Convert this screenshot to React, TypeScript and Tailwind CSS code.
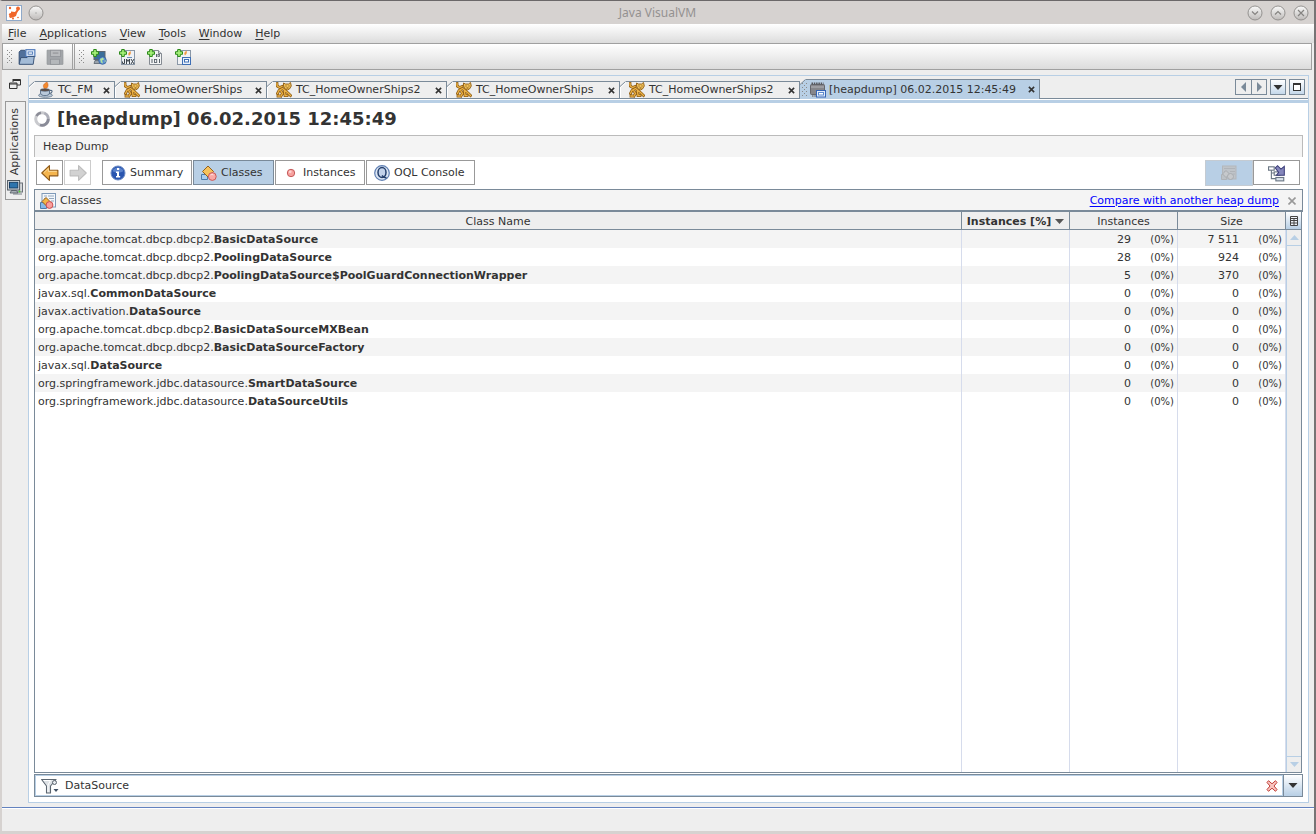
import React from "react";

type IconProps = { className?: string };

const Svg = ({ children, className = "h-4 w-4" }: { children: React.ReactNode; className?: string }) => (
  <svg viewBox="0 0 16 16" className={`${className} shrink-0`} aria-hidden="true">
    {children}
  </svg>
);

const AppIcon = () => (
  <Svg>
    <rect x="0.5" y="0.5" width="15" height="15" fill="#fff" stroke="#8fa9c9" />
    <path d="M5 6.500l4 .5 3-4 1.500 1-2.500 4-1 3-3 1.500-3 .5-1-2 2-1z" fill="#f0662a" />
    <circle cx="4" cy="3" r="1.200" fill="#f0662a" />
    <circle cx="12" cy="3.500" r="1.900" fill="#f0662a" />
    <circle cx="4.500" cy="9.500" r="1.600" fill="#f0662a" />
    <circle cx="7" cy="13.500" r="1" fill="#f0662a" />
    <circle cx="12" cy="12.500" r="0.800" fill="#f0662a" />
  </Svg>
);

const Orb = ({ d }: { d: string }) => (
  <svg viewBox="0 0 16 16" className="h-4 w-4" aria-hidden="true">
    <defs>
      <linearGradient id="orb" x1="0" y1="0" x2="0" y2="1">
        <stop offset="0" stopColor="#fafafa" />
        <stop offset="1" stopColor="#bdbab8" />
      </linearGradient>
    </defs>
    <circle cx="8" cy="8" r="7" fill="url(#orb)" stroke="#8c8a88" strokeWidth="0.9" />
    <path d={d} fill="none" stroke="#858381" strokeWidth="1.2" />
  </svg>
);

const OpenIcon = () => (
  <Svg className="h-[18px] w-[18px]">
    <path d="M1 14V3.500L2.500 2H6l1 1.500h5V14z" fill="#51709a" stroke="#324c70" strokeWidth="0.8" />
    <rect x="7" y="1.500" width="8" height="6" fill="#e8f0fa" stroke="#4a76b8" />
    <rect x="9" y="3.500" width="4" height="2" fill="#fff" stroke="#4a76b8" strokeWidth="0.8" />
    <path d="M1 14.500L2.500 8.500h5.500l1-1H14.500l-1 7z" fill="#a3bbd6" stroke="#324c70" strokeWidth="0.8" />
  </Svg>
);

const SaveIcon = () => (
  <Svg className="h-[18px] w-[18px]">
    <path d="M1 2h14v12.500H1z" fill="#a3a6aa" stroke="#94979b" strokeWidth="0.8" />
    <rect x="4" y="2" width="9" height="5.500" fill="#b9bbbe" stroke="#909397" strokeWidth="0.7" />
    <rect x="4" y="10" width="8" height="4.500" fill="#b5b8bb" stroke="#909397" strokeWidth="0.7" />
    <path d="M6 4.500h5" stroke="#909397" />
  </Svg>
);

const Plus = () => (
  <path d="M2.700 0.500h2.600v2.200h2.200v2.600H5.300v2.200H2.700V5.300H0.500V2.700h2.200z" fill="#a4ee78" stroke="#2c8a1b" strokeWidth="1" />
);

const AddHostIcon = () => (
  <Svg>
    <rect x="3" y="2.500" width="11" height="8" fill="#3a6f9b" stroke="#5c6671" />
    <path d="M4 11.500h6v3H3z" fill="#9aa3ac" stroke="#4c5661" strokeWidth="0.7" />
    <circle cx="11.500" cy="11.500" r="3.800" fill="#5b8fd0" stroke="#35619b" strokeWidth="0.8" />
    <path d="M9 10l3-1.500 1 2-2 1 1 3-2-1zM13.500 11.500l1.500 0-1 2z" fill="#b2e59f" />
    <Plus />
  </Svg>
);

const AddJmxIcon = () => (
  <Svg>
    <rect x="2.500" y="1.500" width="13" height="14" fill="#eef1f5" stroke="#8a97a6" />
    <path d="M11.500 2c-2 1.500-3 3-1.500 5 1-1 2.500-2 1.500-5" fill="#f39a42" />
    <path d="M8 8.500h5" stroke="#6c8fb8" />
    <path d="M5.500 10v4.500H3.500v-2M7.500 15v-5l1.500 2.500 1.500-2.500v5M12 10l3 5M15 10l-3 5" fill="none" stroke="#3e474f" strokeWidth="1" />
    <Plus />
  </Svg>
);

const AddCoreIcon = () => (
  <Svg>
    <path d="M2.500 1.500h9l3 3v11h-12z" fill="#f3f4f5" stroke="#858b92" />
    <path d="M11.500 1.500v3h3" fill="#cfd3d8" stroke="#858b92" />
    <path d="M9.500 5v3M5 10v4M12.500 10v4" stroke="#5b646d" />
    <rect x="11" y="5.500" width="1.500" height="2" fill="none" stroke="#5b646d" strokeWidth="0.8" />
    <rect x="7.500" y="10.500" width="2.200" height="3" fill="none" stroke="#5b646d" strokeWidth="0.9" />
    <Plus />
  </Svg>
);

const AddSnapshotIcon = () => (
  <Svg>
    <rect x="2.500" y="1.500" width="13" height="14" fill="#f0f2f5" stroke="#8a97a6" />
    <path d="M11.500 1.500c-2 1.500-3 3-1.500 5 1-1 2.500-2 1.500-5" fill="#f39a42" />
    <rect x="7.500" y="8.500" width="8" height="7" fill="#e8f0fa" stroke="#3f6fb5" />
    <rect x="9.500" y="10.500" width="4" height="2.500" fill="#fff" stroke="#3f6fb5" />
    <Plus />
  </Svg>
);

const JavaIcon = () => (
  <Svg>
    <path d="M9 0C4 3 5 4 7 8c1-2 5-3 2-8" fill="#f28a2e" stroke="#cf5a1b" strokeWidth="0.5" />
    <ellipse cx="7.500" cy="13.300" rx="7" ry="2" fill="#bccad8" stroke="#63778d" strokeWidth="0.8" />
    <path d="M2.500 8h9v3c0 3.500-9 3.500-9 0z" fill="#b9c9da" stroke="#566c84" strokeWidth="0.9" />
    <ellipse cx="7" cy="8" rx="4.500" ry="1.200" fill="#5d4332" stroke="#566c84" strokeWidth="0.7" />
    <path d="M11.500 8.500c4-1 3 3-.5 3" fill="none" stroke="#566c84" strokeWidth="1.100" />
  </Svg>
);

const catBody = "M1 1.500L1.200 4 3.500 5.500 6 4.500M2 14h1.500M1.500 11.500L3 8.500 6.500 6.500 9 8.500 12 11 14.500 13.500M5 9L6.500 11.500 5 14M8.500 9L9 13.500H11";

const CatIcon = () => (
  <Svg>
    <path d={catBody} fill="none" stroke="#8f5c12" strokeWidth="2.800" strokeLinecap="square" />
    <path d="M7.500 1l2 1h3l2-1.500.8 3.500-1.800 3-2 1-2.500-1-1.500-3z" fill="#f0c05a" stroke="#8f5c12" strokeWidth="0.900" />
    <path d={catBody} fill="none" stroke="#ecb347" strokeWidth="1.300" strokeLinecap="square" />
    <path d="M9.500 4h1M12.500 4h1M10.500 6h2" stroke="#6f4308" strokeWidth="0.9" />
  </Svg>
);

const HeapIcon = () => (
  <Svg>
    <rect x="0.500" y="2.500" width="14" height="10" rx="1" fill="#85868b" stroke="#66686e" />
    <path d="M1.500 1.500h12" stroke="#55575d" strokeWidth="2" strokeDasharray="1.500 0.800" />
    <path d="M2 14h5" stroke="#77797f" strokeWidth="1.500" strokeDasharray="1.500 0.800" />
    <path d="M1 5h13" stroke="#b4b5ba" />
    <rect x="6.500" y="8.500" width="9" height="6.500" fill="#e3ecf8" stroke="#3565b5" />
    <rect x="8.500" y="10.500" width="5" height="2.500" fill="#fff" stroke="#5d8bd0" />
  </Svg>
);

const MonitorIcon = () => (
  <Svg>
    <rect x="5" y="4" width="10.500" height="9" fill="#d4d7da" stroke="#6a7179" />
    <path d="M6 15h9" stroke="#777e86" />
    <rect x="0.600" y="1.500" width="12" height="9.500" fill="#dfe2e5" stroke="#4d555e" />
    <rect x="2.500" y="3.300" width="8.300" height="5.700" fill="#2e74ad" stroke="#173f66" />
    <path d="M3 14l1.500-2.500h5L11 14z" fill="#a9afb6" stroke="#4d555e" strokeWidth="0.8" />
    <circle cx="12.500" cy="12.500" r="0.900" fill="#4bd32d" />
  </Svg>
);

const Spinner = () => (
  <Svg>
    <circle cx="8" cy="8" r="6.300" fill="none" stroke="#c9cace" strokeWidth="3" />
    <path d="M6 14a6.300 6.300 0 0 0 8.300-6" fill="none" stroke="#8a8b98" strokeWidth="2.800" />
    <path d="M14.300 8a6.300 6.300 0 0 0-4-5.900" fill="none" stroke="#adaeb8" strokeWidth="2.600" />
    <path d="M7 1.800a6.300 6.300 0 0 0-4.500 3" fill="none" stroke="#8b8c97" strokeWidth="2.600" />
  </Svg>
);

const ArrowIcon = ({ left }: { left?: boolean }) => (
  <Svg className={left ? "h-[18px] w-[18px]" : "h-[18px] w-[18px] -scale-x-100"}>
    <path
      d="M0.700 8L7.500 1.500v4H15v5H7.500v4z"
      fill={left ? "#f5b54e" : "#d2d2d2"}
      stroke={left ? "#8f5a18" : "#bdbdbd"}
      strokeWidth="1"
      strokeLinejoin="round"
    />
    {left && <path d="M2.500 7.700L6.500 4v2.500H14" fill="none" stroke="#fde0a3" strokeWidth="0.800" />}
  </Svg>
);

const InfoIcon = () => (
  <Svg>
    <circle cx="8" cy="8" r="7" fill="#2a56b0" stroke="#6c8bc4" />
    <path d="M2.500 6a6 6 0 0 1 11 0c-3 2-8 2-11 0" fill="#5b83cc" />
    <path d="M7 3h2.200v2H7zM6 6.500h3V11h1.200v1.500H6V11h1V8H6z" fill="#fff" />
  </Svg>
);

const ClassesIcon = () => (
  <Svg>
    <path d="M0.500 9.500h6v5h-6z" fill="#a9cdef" stroke="#4e7cab" />
    <path d="M7 1l5.500 5.500L7 12 1.500 6.500z" fill="#f6c25c" stroke="#95611c" />
    <circle cx="11.300" cy="11.500" r="3.900" fill="#f9a9a6" stroke="#cb5a59" />
    <path d="M9.500 10a2.500 2.500 0 0 1 3 0" stroke="#fde0df" fill="none" />
  </Svg>
);

const ClassesListIcon = () => (
  <Svg>
    <rect x="2" y="0.500" width="13.500" height="13.500" fill="#f3f7fb" stroke="#7f9ab8" />
    <path d="M4 3h3M8 3h6M4 5.500h2M9 5.500h5M11 8h3" stroke="#93a7bd" />
    <path d="M0.500 9.500h6v6h-6z" fill="#86b9e6" stroke="#4e7cab" />
    <path d="M6 4.500l4 4-4 4-4-4z" fill="#f3b544" stroke="#95611c" />
    <circle cx="9.500" cy="12" r="3.400" fill="#f99f9c" stroke="#cb4f4f" />
  </Svg>
);

const DotIcon = () => (
  <Svg>
    <circle cx="8" cy="8" r="3.700" fill="#f7a19e" stroke="#bd4f4f" strokeWidth="0.900" />
    <circle cx="7.200" cy="6.800" r="1.400" fill="#fdd3d1" />
  </Svg>
);

const OqlIcon = () => (
  <Svg>
    <circle cx="8" cy="8" r="7.300" fill="#dce6f4" stroke="#5f7fb3" strokeWidth="1.200" />
    <ellipse cx="8" cy="7.500" rx="4" ry="4.900" fill="#c3d2ea" stroke="#243f6c" strokeWidth="1.500" />
    <path d="M8 10.500c1.500 2 2.500 2.700 4.500 2" fill="none" stroke="#243f6c" strokeWidth="1.500" />
  </Svg>
);

const GrayListIcon = () => (
  <Svg>
    <rect x="1.500" y="1" width="13.500" height="13" fill="#bfc4c9" stroke="#b3b7bb" />
    <path d="M3 3.500h11M3 6.500h3M9 6.500h5M12 9h2" stroke="#b0b4b9" />
    <path d="M0.500 9.500h5v5h-5z" fill="#bdc2c6" stroke="#afb3b7" />
    <path d="M5 5.500l3.500 3.500L5 12.500 1.500 9z" fill="#c6c9cc" stroke="#a9adb1" />
    <circle cx="9.500" cy="11.500" r="3" fill="#c6c9cc" stroke="#a9adb1" />
  </Svg>
);

const TreeIcon = () => (
  <Svg className="h-[18px] w-[18px]">
    <path d="M3 4v9h5M3 8h5" fill="none" stroke="#6b7784" />
    <rect x="0.500" y="2.500" width="5" height="3" fill="#fff" stroke="#6b7784" />
    <rect x="5.500" y="7" width="5" height="3" fill="#fff" stroke="#6b7784" />
    <rect x="7" y="12" width="7" height="3" fill="#dbe3ec" stroke="#6b7784" />
    <path d="M6.500 3.500L8.500 1.500l3 3L14.500 2v8h-7l2-2.500z" fill="#8486bb" stroke="#3a3c78" strokeWidth="0.900" />
  </Svg>
);

const GridIcon = () => (
  <svg viewBox="0 0 8 10" className="h-[10px] w-2" aria-hidden="true">
    <path d="M0.500 0.500h7v9h-7zM0.500 2.500h7M0.500 4.500h7M0.500 7h7M4 2v7.500" fill="#eef3f9" stroke="#444" strokeWidth="1" />
  </svg>
);

const FilterIcon = () => (
  <svg viewBox="0 0 18 16" className="h-4 w-[18px] shrink-0" aria-hidden="true">
    <path d="M0.600 1.500h14.500L9.500 8v7H5.500V8z" fill="#dde1e5" stroke="#5c6670" strokeWidth="1.100" strokeLinejoin="round" />
    <path d="M2.500 2.500h7L7 7v7" fill="none" stroke="#fff" />
    <circle cx="13.500" cy="4.500" r="2" fill="#e8ecf0" stroke="#5c6670" />
    <path d="M12.500 11h5L15 14z" fill="#3f4f63" />
  </svg>
);

const ClearIcon = () => (
  <svg viewBox="0 0 12 12" className="h-3 w-3" aria-hidden="true">
    <path
      d="M1 2.500L2.500 0.700 6 3.800 9.500 0.700 11 2.500 8 6l3 3.500-1.500 1.800L6 8.200 2.500 11.300 1 9.500 4 6z"
      fill="#f9c4bf"
      stroke="#c03f38"
      strokeWidth="1"
    />
  </svg>
);

const Triangle = ({ className, d = "M0 0h9L4.500 5z", box = "0 0 9 5" }: IconProps & { d?: string; box?: string }) => (
  <svg viewBox={box} className={className} aria-hidden="true">
    <path d={d} fill="currentColor" />
  </svg>
);

const CloseX = ({ className }: IconProps) => (
  <svg viewBox="0 0 8 8" className={className} aria-hidden="true">
    <path d="M1 1l6 6M7 1L1 7" fill="none" stroke="currentColor" strokeWidth="1.800" />
  </svg>
);

const Grip = () => (
  <svg viewBox="0 0 6 14" className="h-[14px] w-[6px] shrink-0" aria-hidden="true">
    <path d="M0.500 0v14M4.500 0v14" stroke="#8b8b8b" strokeDasharray="1 3" />
    <path d="M2.500 2v12" stroke="#8b8b8b" strokeDasharray="1 3" />
  </svg>
);

const menus = ["File", "Applications", "View", "Tools", "Window", "Help"];

const tabs = [
  { label: "TC_FM", width: "w-[86px]", icon: <JavaIcon /> },
  { label: "HomeOwnerShips", width: "w-[152px]", icon: <CatIcon /> },
  { label: "TC_HomeOwnerShips2", width: "w-[180px]", icon: <CatIcon /> },
  { label: "TC_HomeOwnerShips", width: "w-[173px]", icon: <CatIcon /> },
  { label: "TC_HomeOwnerShips2", width: "w-[180px]", icon: <CatIcon /> },
];

const rows: [string, string, string, string][] = [
  ["org.apache.tomcat.dbcp.dbcp2.", "BasicDataSource", "29", "7 511"],
  ["org.apache.tomcat.dbcp.dbcp2.", "PoolingDataSource", "28", "924"],
  ["org.apache.tomcat.dbcp.dbcp2.", "PoolingDataSource$PoolGuardConnectionWrapper", "5", "370"],
  ["javax.sql.", "CommonDataSource", "0", "0"],
  ["javax.activation.", "DataSource", "0", "0"],
  ["org.apache.tomcat.dbcp.dbcp2.", "BasicDataSourceMXBean", "0", "0"],
  ["org.apache.tomcat.dbcp.dbcp2.", "BasicDataSourceFactory", "0", "0"],
  ["javax.sql.", "DataSource", "0", "0"],
  ["org.springframework.jdbc.datasource.", "SmartDataSource", "0", "0"],
  ["org.springframework.jdbc.datasource.", "DataSourceUtils", "0", "0"],
];

const ValueCell = ({ value }: { value: string }) => (
  <td className="border-r border-[#d6dcec] p-0 pt-[2px]">
    <div className="flex items-center justify-end pr-[3px]">
      <span>{value}</span>
      <span className="w-[43px] text-right text-[10px]">(0%)</span>
    </div>
  </td>
);

const viewButton = "flex h-[25px] items-center gap-1 border pl-[7px] bg-white border-[#999]";
const smallBox = "flex h-4 items-center justify-center border border-[#7a8a99]";
const headCell = "border-r border-b border-[#7a8a99] p-0 pt-[2px]";

export default function App() {
  return (
    <div className="flex h-screen flex-col overflow-hidden border-t border-r-2 border-l-2 border-t-[#6b6869] border-r-[#777475] border-l-[#d6d2d0] bg-[#eee] font-['DejaVu_Sans',sans-serif] text-[11px] leading-[14px] text-[#333]">
      <header className="flex h-[23px] shrink-0 items-center bg-[#d6d2d0] pr-[5px] pl-1">
        <div className="flex w-16 items-center gap-[6px]">
          <AppIcon />
          <button aria-label="Window menu">
            <Orb d="M7.500 8h1" />
          </button>
        </div>
        <h1 className="flex-1 text-center font-['Noto_Sans',sans-serif] text-[12px] text-[#949190]">Java VisualVM</h1>
        <div className="flex w-16 justify-end gap-[7px]">
          <button aria-label="Minimize"><Orb d="M5 6.500l3 3 3-3" /></button>
          <button aria-label="Maximize"><Orb d="M5 9.500l3-3 3 3" /></button>
          <button aria-label="Close"><Orb d="M5 5l6 6M11 5l-6 6" /></button>
        </div>
      </header>

      <nav className="flex h-[19px] shrink-0 items-center gap-[13px] bg-linear-to-b from-white to-[#dcdcdc] px-[6px]">
        {menus.map((m) => (
          <button key={m}>
            <span className="underline underline-offset-2">{m[0]}</span>
            {m.slice(1)}
          </button>
        ))}
      </nav>

      <div className="mr-[2px] flex h-[27px] shrink-0 border border-[#a0a0a0] bg-linear-to-b from-white to-[#dcdcdc]">
        <div className="flex w-[70px] items-center border-r border-[#a0a0a0] pl-1">
          <Grip />
          <div className="ml-[5px] flex items-center gap-[10px]">
            <button aria-label="Load"><OpenIcon /></button>
            <button aria-label="Save" disabled><SaveIcon /></button>
          </div>
        </div>
        <div className="ml-px flex items-center border-l border-[#a0a0a0] pl-1">
          <Grip />
          <div className="ml-[6px] flex items-center gap-3">
            <button aria-label="Add remote host"><AddHostIcon /></button>
            <button aria-label="Add JMX connection"><AddJmxIcon /></button>
            <button aria-label="Add VM coredump"><AddCoreIcon /></button>
            <button aria-label="Add snapshot"><AddSnapshotIcon /></button>
          </div>
        </div>
      </div>

      <div className="flex min-h-0 flex-1 pt-[5px] pr-[5px] pb-1">
        <aside className="flex w-[26px] shrink-0 flex-col items-center pt-1">
          <button aria-label="Restore">
            <svg viewBox="0 0 12 10" className="h-[10px] w-3" aria-hidden="true">
              <path d="M4 0.500h7.500v5.500H8M4 0v3M4 1.500h7.500M0.500 4h7.500v5.500H0.500zM0.500 5h7.500" fill="none" stroke="#333" />
            </svg>
          </button>
          <button className="mt-[12px] flex h-[99px] w-[21px] flex-col items-center justify-end gap-1 border border-[#999] pb-1">
            <span className="rotate-180 [writing-mode:vertical-rl]">Applications</span>
            <MonitorIcon />
          </button>
        </aside>

        <main className="flex min-w-0 flex-1 flex-col border border-[#b8cfe5] bg-white">
          <div className="flex h-[23px] shrink-0 items-end bg-[#eee]">
            {tabs.map((t, i) => (
              <div key={i} className={`flex h-[18px] shrink-0 border-r border-b border-[#7a8a99] ${t.width}`}>
                <svg viewBox="0 0 6 17" className="h-[17px] w-[6px] shrink-0" aria-hidden="true">
                  <path d="M0 5.500L5.500 0.500" stroke="#7a8a99" />
                  <path d="M0.500 6v11M0.500 6.500L6 1.500" stroke="#fff" fill="none" />
                </svg>
                <div className="flex min-w-0 flex-1 items-center gap-1 border-t border-[#7a8a99] pr-1 pl-[3px]">
                  {t.icon}
                  <button className="whitespace-nowrap">{t.label}</button>
                  <button aria-label="Close tab" className="ml-auto"><CloseX className="h-[7px] w-[7px]" /></button>
                </div>
              </div>
            ))}
            <div className="flex h-5 w-[240px] shrink-0 bg-[#b8cfe5]">
              <svg viewBox="0 0 6 20" className="h-5 w-[6px] shrink-0" aria-hidden="true">
                <path d="M0 0h5.500L0 5.500z" fill="#eee" />
                <path d="M0 5.500L5.500 0.500" stroke="#7a8a99" />
              </svg>
              <div className="flex min-w-0 flex-1 items-center border-t border-r border-[#7a8a99] pr-1">
                <div className="-ml-1 mr-[2px]"><Grip /></div>
                <HeapIcon />
                <button className="ml-[3px] whitespace-nowrap">[heapdump] 06.02.2015 12:45:49</button>
                <button aria-label="Close tab" className="ml-auto"><CloseX className="h-[7px] w-[7px]" /></button>
              </div>
            </div>
            <div className="flex h-[23px] flex-1 justify-end border-b border-[#7a8a99] pt-[3px] pr-[3px]">
              <button aria-label="Scroll tabs left" className={`${smallBox} w-4 border-r-0 text-[#7a8a99]`}>
                <Triangle className="h-[10px] w-[5px]" box="0 0 5 10" d="M5 0v10L0 5z" />
              </button>
              <button aria-label="Scroll tabs right" className={`${smallBox} w-4 text-[#7a8a99]`}>
                <Triangle className="h-[10px] w-[5px]" box="0 0 5 10" d="M0 0v10l5-5z" />
              </button>
              <button aria-label="Tab list" className={`${smallBox} ml-[3px] w-4 bg-linear-to-b from-white to-[#c5d8ea]`}>
                <Triangle className="h-[5px] w-[10px]" />
              </button>
              <button aria-label="Maximize panel" className={`${smallBox} ml-[3px] w-4 bg-linear-to-b from-white to-[#c5d8ea]`}>
                <span className="h-2 w-2 border border-t-2 border-[#333] bg-white" />
              </button>
            </div>
          </div>
          <div className="h-1 shrink-0 border-t border-white bg-[#b8cfe5]" />

          <section className="flex min-h-0 flex-1 flex-col px-[5px] pb-[5px]">
            <div className="flex h-8 shrink-0 items-center gap-[7px]">
              <Spinner />
              <h2 className="text-[18px] leading-6 font-bold">[heapdump] 06.02.2015 12:45:49</h2>
            </div>
            <div className="h-[22px] shrink-0 border border-b-0 border-[#bbb] bg-[#f4f4f4] pt-1 pl-2">Heap Dump</div>

            <div className="flex h-8 shrink-0 items-start pt-[3px] pr-[3px] pl-[2px]">
              <button aria-label="Back" className="flex h-[25px] w-[27px] items-center justify-center border border-[#999]">
                <ArrowIcon left />
              </button>
              <button aria-label="Forward" disabled className="ml-px flex h-[25px] w-[27px] items-center justify-center border border-[#ccc]">
                <ArrowIcon />
              </button>
              <button className={`${viewButton} ml-[11px] w-[90px]`}><InfoIcon />Summary</button>
              <button className="ml-px flex h-[25px] w-[81px] items-center gap-1 border border-[#7a8a99] bg-[#b8cfe5] pl-[7px]"><ClassesIcon />Classes</button>
              <button className={`${viewButton} ml-px w-[90px]`}><DotIcon />Instances</button>
              <button className={`${viewButton} ml-px w-[109px]`}><OqlIcon />OQL Console</button>
              <button aria-label="Details" disabled className="ml-auto flex h-[26px] w-12 items-center justify-center border border-[#c4cbd2] bg-[#b8cfe5]">
                <GrayListIcon />
              </button>
              <button aria-label="Show nearest GC root" className="flex h-[25px] w-[47px] items-center justify-center border border-[#999]">
                <TreeIcon />
              </button>
            </div>

            <div className="flex h-[23px] shrink-0 items-center gap-1 border border-b-2 border-[#7a8a99] bg-[#f4f4f4] pt-px pr-[6px] pl-[5px]">
              <ClassesListIcon />
              <h3>Classes</h3>
              <a href="#compare" className="ml-auto text-[#0000ff] underline underline-offset-2">Compare with another heap dump</a>
              <button aria-label="Close classes" className="ml-[5px]">
                <svg viewBox="0 0 8 8" className="h-2 w-2" aria-hidden="true">
                  <path d="M0.500 0.500l7 7M7.500 0.500l-7 7" stroke="#999" strokeWidth="1.600" />
                </svg>
              </button>
            </div>

            <div className="mr-px flex min-h-0 flex-1 border border-t-0 border-[#7a8a99]">
              <div className="min-w-0 flex-1">
                <table className="h-full w-full table-fixed border-separate border-spacing-0">
                  <thead>
                    <tr className="h-[18px] bg-[#eee]">
                      <th className={`${headCell} font-normal`}>Class Name</th>
                      <th className={`${headCell} w-[108px] font-bold`}>
                        <span className="flex items-center justify-center gap-1">
                          Instances [%]
                          <Triangle className="h-[5px] w-[9px] text-[#555]" />
                        </span>
                      </th>
                      <th className={`${headCell} w-[108px] font-normal`}>Instances</th>
                      <th className={`${headCell} w-[108px] font-normal`}>Size</th>
                    </tr>
                  </thead>
                  <tbody>
                    {rows.map(([pkg, name, count, size], i) => (
                      <tr key={i} className="h-[18px] odd:bg-[#f4f4f4]">
                        <td className="border-r border-[#d6dcec] p-0 pt-[2px] pl-[3px] whitespace-nowrap">
                          {pkg}
                          <b>{name}</b>
                        </td>
                        <td className="border-r border-[#d6dcec] p-0" />
                        <ValueCell value={count} />
                        <ValueCell value={size} />
                      </tr>
                    ))}
                    <tr className="h-full" aria-hidden="true">
                      <td className="border-r border-[#d6dcec]" />
                      <td className="border-r border-[#d6dcec]" />
                      <td className="border-r border-[#d6dcec]" />
                      <td className="border-r border-[#d6dcec]" />
                    </tr>
                  </tbody>
                </table>
              </div>
              <div className="flex w-[15px] shrink-0 flex-col bg-[#eee]">
                <button aria-label="Change visible columns" className="flex h-[18px] items-center justify-center border-b border-[#7a8a99] bg-linear-to-b from-white to-[#b8cfe5]">
                  <GridIcon />
                </button>
                <button aria-label="Scroll up" className="flex h-4 items-center justify-center border-b border-l border-[#b8cfe5] text-[#b8cfe5]">
                  <Triangle className="h-[5px] w-[9px]" d="M0 5h9L4.500 0z" />
                </button>
                <div className="flex-1 border-l border-[#b8cfe5]" />
                <button aria-label="Scroll down" className="flex h-4 items-center justify-center border-t border-l border-[#b8cfe5] text-[#b8cfe5]">
                  <Triangle className="h-[5px] w-[9px]" />
                </button>
              </div>
            </div>

            <div className="mt-px flex h-[23px] shrink-0 border border-[#7a8a99]">
              <div className="flex flex-1 items-center gap-[6px] border border-[#b8cfe5] pr-1 pl-[5px]">
                <FilterIcon />
                <input aria-label="Class filter" defaultValue="DataSource" className="min-w-0 flex-1 bg-transparent p-0 outline-none" />
                <button aria-label="Clear filter"><ClearIcon /></button>
              </div>
              <button aria-label="Filter history" className="flex w-[19px] items-center justify-center border-l border-[#7a8a99] bg-linear-to-b from-white to-[#b8cfe5]">
                <Triangle className="h-[5px] w-[10px]" />
              </button>
            </div>
          </section>
        </main>
      </div>

      <footer className="h-[27px] shrink-0 border-t border-b-[3px] border-t-[#6382bf] border-b-[#d6d2d0] bg-[#eee]">
        <div className="h-px bg-white" />
      </footer>
    </div>
  );
}
